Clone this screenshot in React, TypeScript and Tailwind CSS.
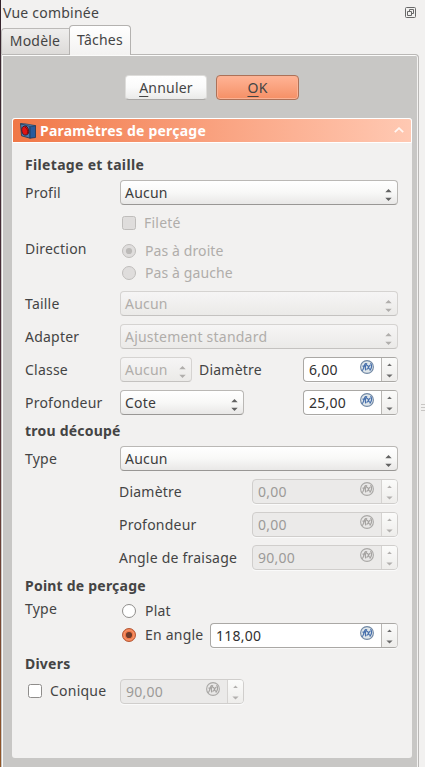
import type { ReactNode } from 'react';

function cx(...parts: (string | false | undefined)[]) {
  return parts.filter(Boolean).join(' ');
}

function Row({ children, className }: { children: ReactNode; className?: string }) {
  return <div className={cx('flex shrink-0 items-center', className ?? 'h-[33px]')}>{children}</div>;
}

function Label({ children, className }: { children: ReactNode; className?: string }) {
  return <span className={cx('shrink-0 leading-5 whitespace-nowrap', className ?? 'w-[95px]')}>{children}</span>;
}

function Heading({ children, className }: { children: ReactNode; className: string }) {
  return <h2 className={cx('shrink-0 text-[14px] font-bold whitespace-nowrap', className)}>{children}</h2>;
}

function ComboBox({ value, width, disabled }: { value: string; width: string; disabled?: boolean }) {
  return (
    <div
      className={cx(
        'flex h-[25px] shrink-0 items-center justify-between rounded-[4px] border bg-linear-to-b pr-[5px] pl-1',
        width,
        disabled
          ? 'border-[#d5d3d1] border-b-[#c4c2c0] from-[#f6f5f5] to-[#ebeae8] text-[#b0adaa]'
          : 'border-[#bab8b5] border-b-[#999795] from-white via-[#f8f8f7] to-[#e9e8e7] text-[#3c3c3c]',
      )}
    >
      <span className="leading-5 whitespace-nowrap">{value}</span>
      <svg width="7" height="12" viewBox="0 0 7 12" className={cx('mt-[5px]', disabled ? 'fill-[#b0aeac]' : 'fill-[#626262]')}>
        <path d="M0.3 3.2 3.5 0 6.7 3.2ZM0.3 8.8H6.7L3.5 12Z" />
      </svg>
    </div>
  );
}

function FormulaIcon({ disabled }: { disabled?: boolean }) {
  return (
    <svg width="14" height="14" viewBox="0 0 14 14" className="mb-[5px] shrink-0">
      <circle
        cx="7"
        cy="7"
        r="6.4"
        fill={disabled ? '#e8e7e6' : '#dfe6ea'}
        stroke={disabled ? '#aaa9a7' : '#7188a4'}
        strokeWidth="1.1"
      />
      <g fill="none" stroke={disabled ? '#a5a3a1' : '#466fac'} strokeWidth="1.2" strokeLinecap="round">
        <path d="M2.2 10.4C3.8 10.5 3.7 3.9 5.7 3.6M2.9 6.1H5.2" />
        <path d="M6.7 3.7C5.3 5.5 5.1 8 5.7 10" />
        <path d="M7.1 5.4C8.6 5.2 8.2 9.3 9.8 9.1M10 5.3C8.6 5.5 8.3 9.2 6.9 9.1" />
        <path d="M10.8 3.6C12 5.4 11.4 8.3 10.1 10.2" />
      </g>
    </svg>
  );
}

function SpinBox({ value, width, disabled }: { value: string; width: string; disabled?: boolean }) {
  return (
    <div
      className={cx(
        'flex h-[25px] shrink-0 overflow-hidden rounded-[4px] border shadow-[0_1px_0_#fafafa]',
        width,
        disabled
          ? 'border-[#d0cecc] bg-[#ebeae9] text-[#9c9a98]'
          : 'border-[#aaa8a5] border-r-[#c9c7c5] bg-white text-[#303030]',
      )}
    >
      <div className="flex flex-1 items-center justify-between pr-[7px] pl-[5px]">
        <span className="pt-px leading-5 whitespace-nowrap">{value}</span>
        <FormulaIcon disabled={disabled} />
      </div>
      <div
        className={cx(
          'flex w-[16px] items-center justify-center border-l bg-linear-to-b from-[#fbfbfa] to-[#eeedeb]',
          disabled ? 'border-[#d5d3d1]' : 'border-[#b8b6b3]',
        )}
      >
        <svg width="7" height="15" viewBox="0 0 7 15" className="mt-px">
          <path d="M1.2 3 3.5 0.6 5.8 3Z" fill={disabled ? '#b2b0ae' : '#6c6c6c'} />
          <path d="M0.4 11.4H6.6L3.5 14.6Z" fill={disabled ? '#b2b0ae' : '#6c6c6c'} />
        </svg>
      </div>
    </div>
  );
}

function CheckBox({ disabled }: { disabled?: boolean }) {
  return (
    <span
      className={cx(
        'h-[14px] w-[14px] shrink-0 rounded-[2.5px] border',
        disabled ? 'border-[#bfbdbb] bg-[#dfdddc]' : 'mb-px border-[#8f8d8b] bg-white',
      )}
    />
  );
}

function Radio({ state }: { state: 'off' | 'on' | 'disabled' | 'disabled-on' }) {
  const disabled = state.startsWith('disabled');
  return (
    <svg width="14" height="14" viewBox="0 0 14 14" className={cx('shrink-0', state === 'on' && 'mb-px')}>
      <circle
        cx="7"
        cy="7"
        r="6.5"
        fill={disabled ? '#dfdddc' : state === 'on' ? '#f07746' : '#ffffff'}
        stroke={disabled ? '#bfbdbb' : state === 'on' ? '#b35a39' : '#8f8d8b'}
      />
      {state === 'on' && <circle cx="7" cy="7" r="5" fill="none" stroke="#f9a582" strokeWidth="0.8" />}
      {state === 'on' && <circle cx="7" cy="7" r="3.1" fill="#6e3b2b" />}
      {state === 'disabled-on' && <circle cx="7" cy="7" r="3.1" fill="#bcbab8" />}
    </svg>
  );
}

function DrillIcon() {
  return (
    <svg width="16" height="16" viewBox="0 0 16 16" className="shrink-0">
      <path d="M0.5 0.7 10 3V15.2L1.5 12.8Z" fill="#4a7cb0" stroke="#22364f" strokeWidth="0.8" />
      <path d="M10 3.2 15.5 2.6V14.5L10 15.2Z" fill="#285b9c" stroke="#1c3555" strokeWidth="0.8" />
      <path d="M0.5 0.7 5 0.8 15.5 2.6 10 3.4Z" fill="#5182b8" stroke="#29435f" strokeWidth="0.7" />
      <ellipse cx="5.2" cy="7.6" rx="3.4" ry="4.5" transform="rotate(-12 5.2 7.6)" fill="#e01414" stroke="#3b1520" strokeWidth="0.8" />
      <path d="M5 4.2C7.2 5 8.2 8 7.2 11" fill="none" stroke="#8e0808" />
    </svg>
  );
}

export default function App() {
  return (
    <div className="flex h-[767px] w-[425px] overflow-hidden bg-[#f2f1f0] font-['Noto_Sans','Open_Sans',sans-serif] text-[14px] tracking-[0.22px] text-[#444444]">
      <div className="w-px shrink-0 bg-linear-to-b from-[#35242d] via-[#4f303a] to-[#925626]" />
      <div className="flex w-[418px] shrink-0 flex-col">
        <header className="flex h-[25px] shrink-0 items-center justify-between pr-[3px] pl-[2px]">
          <span className="leading-5 whitespace-nowrap">Vue combinée</span>
          <svg width="11" height="11" viewBox="0 0 11 11" fill="none" stroke="#686868">
            <rect x="0.5" y="0.5" width="10" height="10" rx="1" />
            <path d="M4.5 4.5V2.5H8.5V6.5H6.5M2.5 4.5H6.5V8.5H2.5Z" />
          </svg>
        </header>
        <nav className="flex h-[29px] shrink-0 items-end">
          <div className="flex h-[26px] w-[68px] items-center justify-center rounded-tl-[4px] border border-r-0 border-b-0 border-[#bcbab8] bg-linear-to-b from-[#efeeed] to-[#dddbd9]">
            <span className="pr-px pb-px leading-5">Modèle</span>
          </div>
          <div className="z-10 -mb-px flex h-[30px] w-[62px] items-center justify-center rounded-t-[4px] border border-b-0 border-[#b4b2b0] bg-linear-to-b from-white to-[#f3f2f1]">
            <span className="pb-px leading-5">Tâches</span>
          </div>
        </nav>
        <main className="flex flex-1 flex-col rounded-tr-[4px] border border-b-0 border-[#bab8b6] border-l-[#c9c7c5] bg-[#c8c7c5] shadow-[inset_1px_1px_0_#fbfbfa,inset_-1px_0_0_#f4f3f2]">
          <div className="flex h-[63px] shrink-0 gap-[9px] pt-[20px] pl-[123px]">
            <button className="h-[25px] w-[82px] rounded-[4px] border border-[#dedddb] border-b-[#aaa8a6] bg-linear-to-b from-white via-[#fafafa] to-[#eaeae9]">
              <span className="leading-5"><u className="underline-offset-[3px]">A</u>nnuler</span>
            </button>
            <button className="h-[25px] w-[83px] rounded-[4px] border border-[#ad7158] bg-linear-to-b from-[#ffb395] via-[#faa27e] to-[#f58f65] shadow-[inset_0_0_0_1px_#fbb294]">
              <span className="leading-5"><u className="underline-offset-[3px]">O</u>K</span>
            </button>
          </div>
          <section className="ml-[10px] flex h-[640px] w-[400px] shrink-0 flex-col rounded-[3px] bg-[#f2f1f0]">
            <header className="flex h-[25px] shrink-0 items-center rounded-t-[3px] border border-white bg-linear-to-r from-[#f07746] to-[#ffc9b3] pr-[7px] pl-[7px] text-white">
              <DrillIcon />
              <h1 className="ml-[4px] flex-1 font-bold whitespace-nowrap">Paramètres de perçage</h1>
              <svg width="10" height="6" viewBox="0 0 10 6" fill="none" stroke="#fff6f2" strokeWidth="1.8" className="mb-[2px]">
                <path d="M0.8 5.2 5 1.2 9.2 5.2" />
              </svg>
            </header>
            <div className="flex flex-col pt-[11px] pl-[13px]">
              <Heading className="h-[22px] leading-[22px] tracking-[0.33px]">Filetage et taille</Heading>
              <Row>
                <Label>Profil</Label>
                <ComboBox value="Aucun" width="w-[278px]" />
              </Row>
              <Row className="h-[28px] gap-[8px] pl-[97px] text-[#b0adaa]">
                <CheckBox disabled />
                <Label className="">Fileté</Label>
              </Row>
              <div className="flex h-[50px] shrink-0">
                <Label className="w-[97px] pt-[2px]">Direction</Label>
                <div className="flex flex-col pt-[3px] tracking-[0.1px] text-[#b0adaa]">
                  <Row className="h-[22px] gap-[9px]">
                    <Radio state="disabled-on" />
                    <Label className="">Pas à droite</Label>
                  </Row>
                  <Row className="h-[22px] gap-[9px]">
                    <Radio state="disabled" />
                    <Label className="">Pas à gauche</Label>
                  </Row>
                </div>
              </div>
              <Row>
                <Label>Taille</Label>
                <ComboBox value="Aucun" width="w-[278px]" disabled />
              </Row>
              <Row>
                <Label>Adapter</Label>
                <ComboBox value="Ajustement standard" width="w-[278px]" disabled />
              </Row>
              <Row>
                <Label>Classe</Label>
                <ComboBox value="Aucun" width="w-[72px]" disabled />
                <Label className="ml-[7px] w-[104px]">Diamètre</Label>
                <SpinBox value="6,00" width="w-[95px]" />
              </Row>
              <Row>
                <Label>Profondeur</Label>
                <ComboBox value="Cote" width="w-[124px]" />
                <div className="w-[59px]" />
                <SpinBox value="25,00" width="w-[95px]" />
              </Row>
              <Heading className="h-[23px] leading-[23px]">trou découpé</Heading>
              <Row>
                <Label>Type</Label>
                <ComboBox value="Aucun" width="w-[278px]" />
              </Row>
              <Row className="h-[33px] pl-[94px]">
                <Label className="w-[133px]">Diamètre</Label>
                <SpinBox value="0,00" width="w-[146px]" disabled />
              </Row>
              <Row className="h-[33px] pl-[94px]">
                <Label className="w-[133px]">Profondeur</Label>
                <SpinBox value="0,00" width="w-[146px]" disabled />
              </Row>
              <Row className="h-[33px] pl-[94px]">
                <Label className="w-[133px]">Angle de fraisage</Label>
                <SpinBox value="90,00" width="w-[146px]" disabled />
              </Row>
              <Heading className="h-[23px] leading-[23px]">Point de perçage</Heading>
              <div className="flex h-[55px] shrink-0">
                <Label className="w-[97px] pt-[2px]">Type</Label>
                <div className="flex flex-col pt-[3px]">
                  <Row className="h-[19px] gap-[9px] pt-[3px]">
                    <Radio state="off" />
                    <Label className="">Plat</Label>
                  </Row>
                  <Row>
                    <Radio state="on" />
                    <Label className="mb-px ml-[9px] w-[65px]">En angle</Label>
                    <SpinBox value="118,00" width="w-[188px]" />
                  </Row>
                </div>
              </div>
              <Heading className="h-[23px] leading-[23px]">Divers</Heading>
              <Row className="h-[33px] pl-[3px]">
                <CheckBox />
                <Label className="mb-px ml-[8px] w-[70px]">Conique</Label>
                <SpinBox value="90,00" width="w-[124px]" disabled />
              </Row>
            </div>
          </section>
        </main>
      </div>
      <div className="flex w-[6px] shrink-0 flex-col items-center gap-[2px] pt-[404px] pl-px">
        <div className="h-px w-[4px] bg-[#c8c6c4]" />
        <div className="h-px w-[4px] bg-[#c8c6c4]" />
        <div className="h-px w-[4px] bg-[#c8c6c4]" />
      </div>
    </div>
  );
}
